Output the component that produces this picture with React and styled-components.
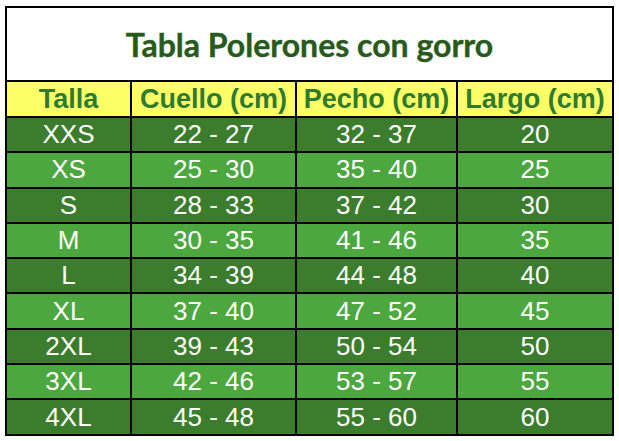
import React from 'react';
import styled, { createGlobalStyle } from 'styled-components';

const SIZES = [
  { talla: 'XXS', cuello: '22 - 27', pecho: '32 - 37', largo: '20' },
  { talla: 'XS', cuello: '25 - 30', pecho: '35 - 40', largo: '25' },
  { talla: 'S', cuello: '28 - 33', pecho: '37 - 42', largo: '30' },
  { talla: 'M', cuello: '30 - 35', pecho: '41 - 46', largo: '35' },
  { talla: 'L', cuello: '34 - 39', pecho: '44 - 48', largo: '40' },
  { talla: 'XL', cuello: '37 - 40', pecho: '47 - 52', largo: '45' },
  { talla: '2XL', cuello: '39 - 43', pecho: '50 - 54', largo: '50' },
  { talla: '3XL', cuello: '42 - 46', pecho: '53 - 57', largo: '55' },
  { talla: '4XL', cuello: '45 - 48', pecho: '55 - 60', largo: '60' },
];

const HEADERS = ['Talla', 'Cuello (cm)', 'Pecho (cm)', 'Largo (cm)'];

const GlobalStyle = createGlobalStyle`
  html, body {
    margin: 0;
    padding: 0;
    background: #fff;
  }
  body {
    font-family: "Liberation Sans", Arial, sans-serif;
  }
`;

const Page = styled.div`
  width: 619px;
  height: 441px;
  padding: 6px 5px 5px 5px;
  box-sizing: border-box;
`;

const Table = styled.div`
  display: grid;
  grid-template-columns: 123px 163px 159px 154px;
  grid-template-rows: 72px 34px repeat(9, 33.3px);
  gap: 2px;
  padding: 2px;
  background: #000;
  width: 609px;
  box-sizing: border-box;
`;

const Title = styled.div`
  grid-column: 1 / -1;
  background: #fff;
  display: flex;
  align-items: center;
  justify-content: center;
  font-family: Lato, "Noto Sans", sans-serif;
  font-weight: 700;
  font-size: 32px;
  color: #285a1c;
  -webkit-text-stroke: 0.4px #285a1c;
`;

const HeadCell = styled.div`
  background: #ffff66;
  color: #2e7b2f;
  font-family: "Liberation Sans", Arial, sans-serif;
  font-weight: 700;
  font-size: 27px;
  display: flex;
  align-items: center;
  justify-content: center;
  white-space: nowrap;
`;

const Cell = styled.div`
  background: ${(p) => (p.$odd ? '#4ca73e' : '#3b7d2d')};
  color: #fff;
  font-family: "Liberation Sans", Arial, sans-serif;
  font-size: 26px;
  display: flex;
  align-items: center;
  justify-content: center;
  white-space: nowrap;
`;

export default function App() {
  return (
    <>
      <GlobalStyle />
      <Page>
        <Table>
          <Title>Tabla Polerones con gorro</Title>
          {HEADERS.map((h) => (
            <HeadCell key={h}>{h}</HeadCell>
          ))}
          {SIZES.map((row, i) => (
            <React.Fragment key={row.talla}>
              <Cell $odd={i % 2 === 1}>{row.talla}</Cell>
              <Cell $odd={i % 2 === 1}>{row.cuello}</Cell>
              <Cell $odd={i % 2 === 1}>{row.pecho}</Cell>
              <Cell $odd={i % 2 === 1}>{row.largo}</Cell>
            </React.Fragment>
          ))}
        </Table>
      </Page>
    </>
  );
}
